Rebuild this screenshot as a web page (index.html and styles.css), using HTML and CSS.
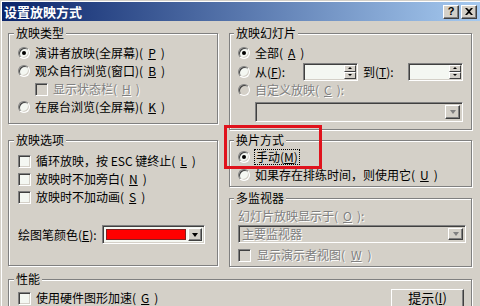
FILE: index.html
```html
<!DOCTYPE html>
<html lang="zh-CN">
<head>
    <meta charset="UTF-8">
    <title>设置放映方式</title>
    <link rel="stylesheet" href="styles.css">
</head>
<body>
    <div class="dialog">
        <div class="titlebar">
            <span class="title">设置放映方式</span>
            <span class="caption-btns">
                <span class="cap-btn">?</span>
                <span class="cap-btn">
                    <svg width="8" height="7" viewBox="0 0 8 7"><path d="M0 0h2l2 2 2-2h2L5 3.5 8 7H6L4 5 2 7H0l3-3.5z" fill="#000"/></svg>
                </span>
            </span>
        </div>

        <div class="body">
            <div class="columns">
                <div class="col">
                    <fieldset class="grp grp-type">
                        <legend>放映类型</legend>
                        <div class="row"><span class="radio on"></span>演讲者放映(全屏幕)(<u>P</u>)</div>
                        <div class="row"><span class="radio"></span>观众自行浏览(窗口)(<u>B</u>)</div>
                        <div class="row indent dis"><span class="check off"></span>显示状态栏(<u>H</u>)</div>
                        <div class="row"><span class="radio"></span>在展台浏览(全屏幕)(<u>K</u>)</div>
                    </fieldset>

                    <fieldset class="grp grp-opts">
                        <legend>放映选项</legend>
                        <div class="row"><span class="check"></span>循环放映，按 ESC 键终止(<u>L</u>)</div>
                        <div class="row"><span class="check"></span>放映时不加旁白(<u>N</u>)</div>
                        <div class="row"><span class="check"></span>放映时不加动画(<u>S</u>)</div>
                        <div class="pen-row">
                            <span class="pen-label">绘图笔颜色(<u>E</u>):</span>
                            <span class="combo color-combo">
                                <span class="swatch"></span>
                                <span class="drop"><span class="arrow"></span></span>
                            </span>
                        </div>
                    </fieldset>
                </div>

                <div class="col">
                    <fieldset class="grp grp-slides">
                        <legend>放映幻灯片</legend>
                        <div class="row"><span class="radio on"></span>全部(<u>A</u>)</div>
                        <div class="row range-row">
                            <span class="radio"></span>
                            <span class="range-from">从(<u>F</u>):</span>
                            <span class="spin">
                                <span class="spin-btns">
                                    <span class="spin-btn"><span class="up"></span></span>
                                    <span class="spin-btn"><span class="down"></span></span>
                                </span>
                            </span>
                            <span class="range-to">到(<u>T</u>):</span>
                            <span class="spin">
                                <span class="spin-btns">
                                    <span class="spin-btn"><span class="up"></span></span>
                                    <span class="spin-btn"><span class="down"></span></span>
                                </span>
                            </span>
                        </div>
                        <div class="row dis"><span class="radio off"></span>自定义放映(<u>C</u>):</div>
                        <div class="combo custom-combo">
                            <span class="combo-val"></span>
                            <span class="drop"><span class="arrow off"></span></span>
                        </div>
                    </fieldset>

                    <fieldset class="grp grp-advance">
                        <legend>换片方式</legend>
                        <div class="row"><span class="radio on"></span><span class="focus">手动(<u>M</u>)</span></div>
                        <div class="row"><span class="radio"></span>如果存在排练时间，则使用它(<u>U</u>)</div>
                    </fieldset>

                    <fieldset class="grp grp-monitor">
                        <legend>多监视器</legend>
                        <div class="row dis">幻灯片放映显示于(<u>O</u>):</div>
                        <div class="combo monitor-combo">
                            <span class="combo-val dis">主要监视器</span>
                            <span class="drop"><span class="arrow off"></span></span>
                        </div>
                        <div class="row dis presenter"><span class="check off"></span>显示演示者视图(<u>W</u>)</div>
                    </fieldset>
                </div>
            </div>

            <fieldset class="grp grp-perf">
                <legend>性能</legend>
                <div class="perf-row">
                    <div class="row"><span class="check"></span>使用硬件图形加速(<u>G</u>)</div>
                    <span class="btn">提示(<u>I</u>)</span>
                </div>
            </fieldset>
        </div>

        <div class="highlight"></div>
    </div>
</body>
</html>
```

FILE: styles.css
```css
* {
    box-sizing: border-box;
}

body {
    margin: 0;
    width: 480px;
    height: 306px;
    overflow: hidden;
    background: #d4d0c8;
    font: 12px/14px "Noto Sans CJK SC", "Liberation Sans", sans-serif;
    color: #000;
}

u {
    text-decoration: underline;
    text-underline-offset: 1px;
}

.dialog {
    position: relative;
    height: 306px;
    padding: 2px 0 0 2px;
    background: #d4d0c8;
    box-shadow: inset 1px 1px #d4d0c8, inset 2px 2px #fff;
}

/* title bar */
.titlebar {
    height: 19px;
    display: flex;
    align-items: center;
    justify-content: space-between;
    padding: 0 3px 0 2px;
    background: linear-gradient(to right, #0a246a, #a6caf0);
}

.title {
    color: #fff;
    font-weight: bold;
    font-size: 13px;
}

.caption-btns {
    display: flex;
    gap: 2px;
}

.cap-btn {
    width: 16px;
    height: 14px;
    display: flex;
    align-items: center;
    justify-content: center;
    background: #d4d0c8;
    border: 1px solid;
    border-color: #fff #404040 #404040 #fff;
    box-shadow: inset -1px -1px #808080;
    font: bold 11px/1 "Liberation Sans", sans-serif;
}

/* body */
.body {
    padding: 5px 0 0 6px;
}

.columns {
    display: grid;
    grid-template-columns: 210px 243px;
    column-gap: 11px;
    align-items: start;
}

.col {
    display: flex;
    flex-direction: column;
}

.grp {
    margin: 0;
    min-width: 0;
    border: 1px solid #808080;
    box-shadow: inset 1px 1px #fff, 1px 1px #fff;
    padding: 4px 8px 7px 9px;
}

.grp legend {
    padding: 0 2px;
    margin-left: -4px;
    line-height: 14px;
    background: #d4d0c8;
}

.col:last-child .grp {
    padding-left: 8px;
}

.grp-opts {
    margin-top: 9px;
    padding: 5px 8px 21px 9px;
}

.grp-advance {
    margin-top: 3px;
    padding-top: 1px;
    padding-bottom: 2px;
}

.grp-monitor {
    margin-top: 4px;
    padding-top: 2px;
    padding-bottom: 2px;
}

.grp-perf {
    width: 464px;
    margin-top: 5px;
    padding: 2px 7px 0 9px;
}

.row {
    height: 18px;
    display: flex;
    align-items: center;
    gap: 5px;
    white-space: nowrap;
}

.indent {
    padding-left: 17px;
}

.dis {
    color: #808080;
    text-shadow: 1px 1px #fff;
}

/* radio and check boxes */
.radio {
    position: relative;
    flex: none;
    width: 12px;
    height: 12px;
    border-radius: 50%;
    background: #f4f7f2;
    border: 1px solid;
    border-color: #808080 #fff #fff #808080;
    box-shadow: inset 1px 1px #404040, inset -1px -1px #d4d0c8;
}

.radio.on::after {
    content: "";
    position: absolute;
    left: 3px;
    top: 3px;
    width: 4px;
    height: 4px;
    border-radius: 50%;
    background: #000;
}

.radio.off,
.check.off {
    background: #d4d0c8;
}

.check {
    flex: none;
    width: 13px;
    height: 13px;
    background: #f4f7f2;
    border: 1px solid;
    border-color: #808080 #fff #fff #808080;
    box-shadow: inset 1px 1px #404040, inset -1px -1px #d4d0c8;
}

.presenter {
    margin-top: 3px;
    gap: 6px;
}

.focus {
    outline: 1px dotted #000;
    outline-offset: 0;
    padding: 0 1px;
}

/* fields */
.range-row {
    height: 19px;
    gap: 0;
}

.range-row .radio {
    margin-right: 5px;
}

.range-from {
    width: 48px;
}

.range-to {
    width: 50px;
    padding-left: 5px;
}

.spin {
    width: 55px;
    height: 18px;
    display: flex;
    justify-content: flex-end;
    padding: 1px;
    background: #f4f7f2;
    border: 1px solid;
    border-color: #808080 #fff #fff #808080;
    box-shadow: inset 1px 1px #404040, inset -1px -1px #d4d0c8;
}

.spin-btns {
    width: 12px;
    display: flex;
    flex-direction: column;
}

.spin-btn {
    flex: 1;
    display: flex;
    align-items: center;
    justify-content: center;
    background: #d4d0c8;
    border: 1px solid;
    border-color: #fff #404040 #404040 #fff;
}

.up,
.down {
    width: 1px;
    border-left: 2px solid transparent;
    border-right: 2px solid transparent;
}

.up {
    border-bottom: 2px solid #000;
}

.down {
    border-top: 2px solid #000;
}

.combo {
    display: flex;
    align-items: stretch;
    padding: 2px;
    background: #d4d0c8;
    border: 1px solid;
    border-color: #808080 #fff #fff #808080;
    box-shadow: inset 1px 1px #404040, inset -1px -1px #d4d0c8;
}

.combo-val {
    flex: 1;
    display: flex;
    align-items: center;
    padding-left: 1px;
}

.drop {
    width: 15px;
    display: flex;
    align-items: center;
    justify-content: center;
    background: #d4d0c8;
    border: 1px solid;
    border-color: #fff #404040 #404040 #fff;
    box-shadow: inset -1px -1px #808080;
}

.arrow {
    width: 1px;
    border-left: 3px solid transparent;
    border-right: 3px solid transparent;
    border-top: 4px solid #000;
}

.arrow.off {
    border-top-color: #808080;
}

.custom-combo {
    height: 20px;
    margin: 3px 0 0 17px;
    width: 208px;
}

.monitor-combo {
    height: 18px;
    width: 228px;
    background: #d4d0c8;
}

.pen-row {
    margin-top: 19px;
    display: flex;
    align-items: center;
    gap: 5px;
}

.color-combo {
    width: 103px;
    height: 19px;
    background: #f4f7f2;
}

.swatch {
    flex: 1;
    margin: 1px 2px 1px 1px;
    background: #ff0000;
    border: 1px solid #802020;
}

.color-combo .drop {
    width: 14px;
}

/* performance row */
.perf-row {
    display: flex;
    justify-content: space-between;
    align-items: flex-start;
}

.perf-row .row {
    margin-top: 1px;
}

.btn {
    margin-top: 1px;
    width: 73px;
    height: 23px;
    display: flex;
    align-items: flex-start;
    justify-content: center;
    padding-top: 1px;
    background: #d4d0c8;
    border: 1px solid;
    border-color: #fff #404040 #404040 #fff;
    box-shadow: inset -1px -1px #808080;
    font-size: 13px;
}

/* red marker drawn over the dialog */
.highlight {
    position: absolute;
    left: 224px;
    top: 125px;
    width: 98px;
    height: 44px;
    border: 3px solid #e0121c;
}
```
